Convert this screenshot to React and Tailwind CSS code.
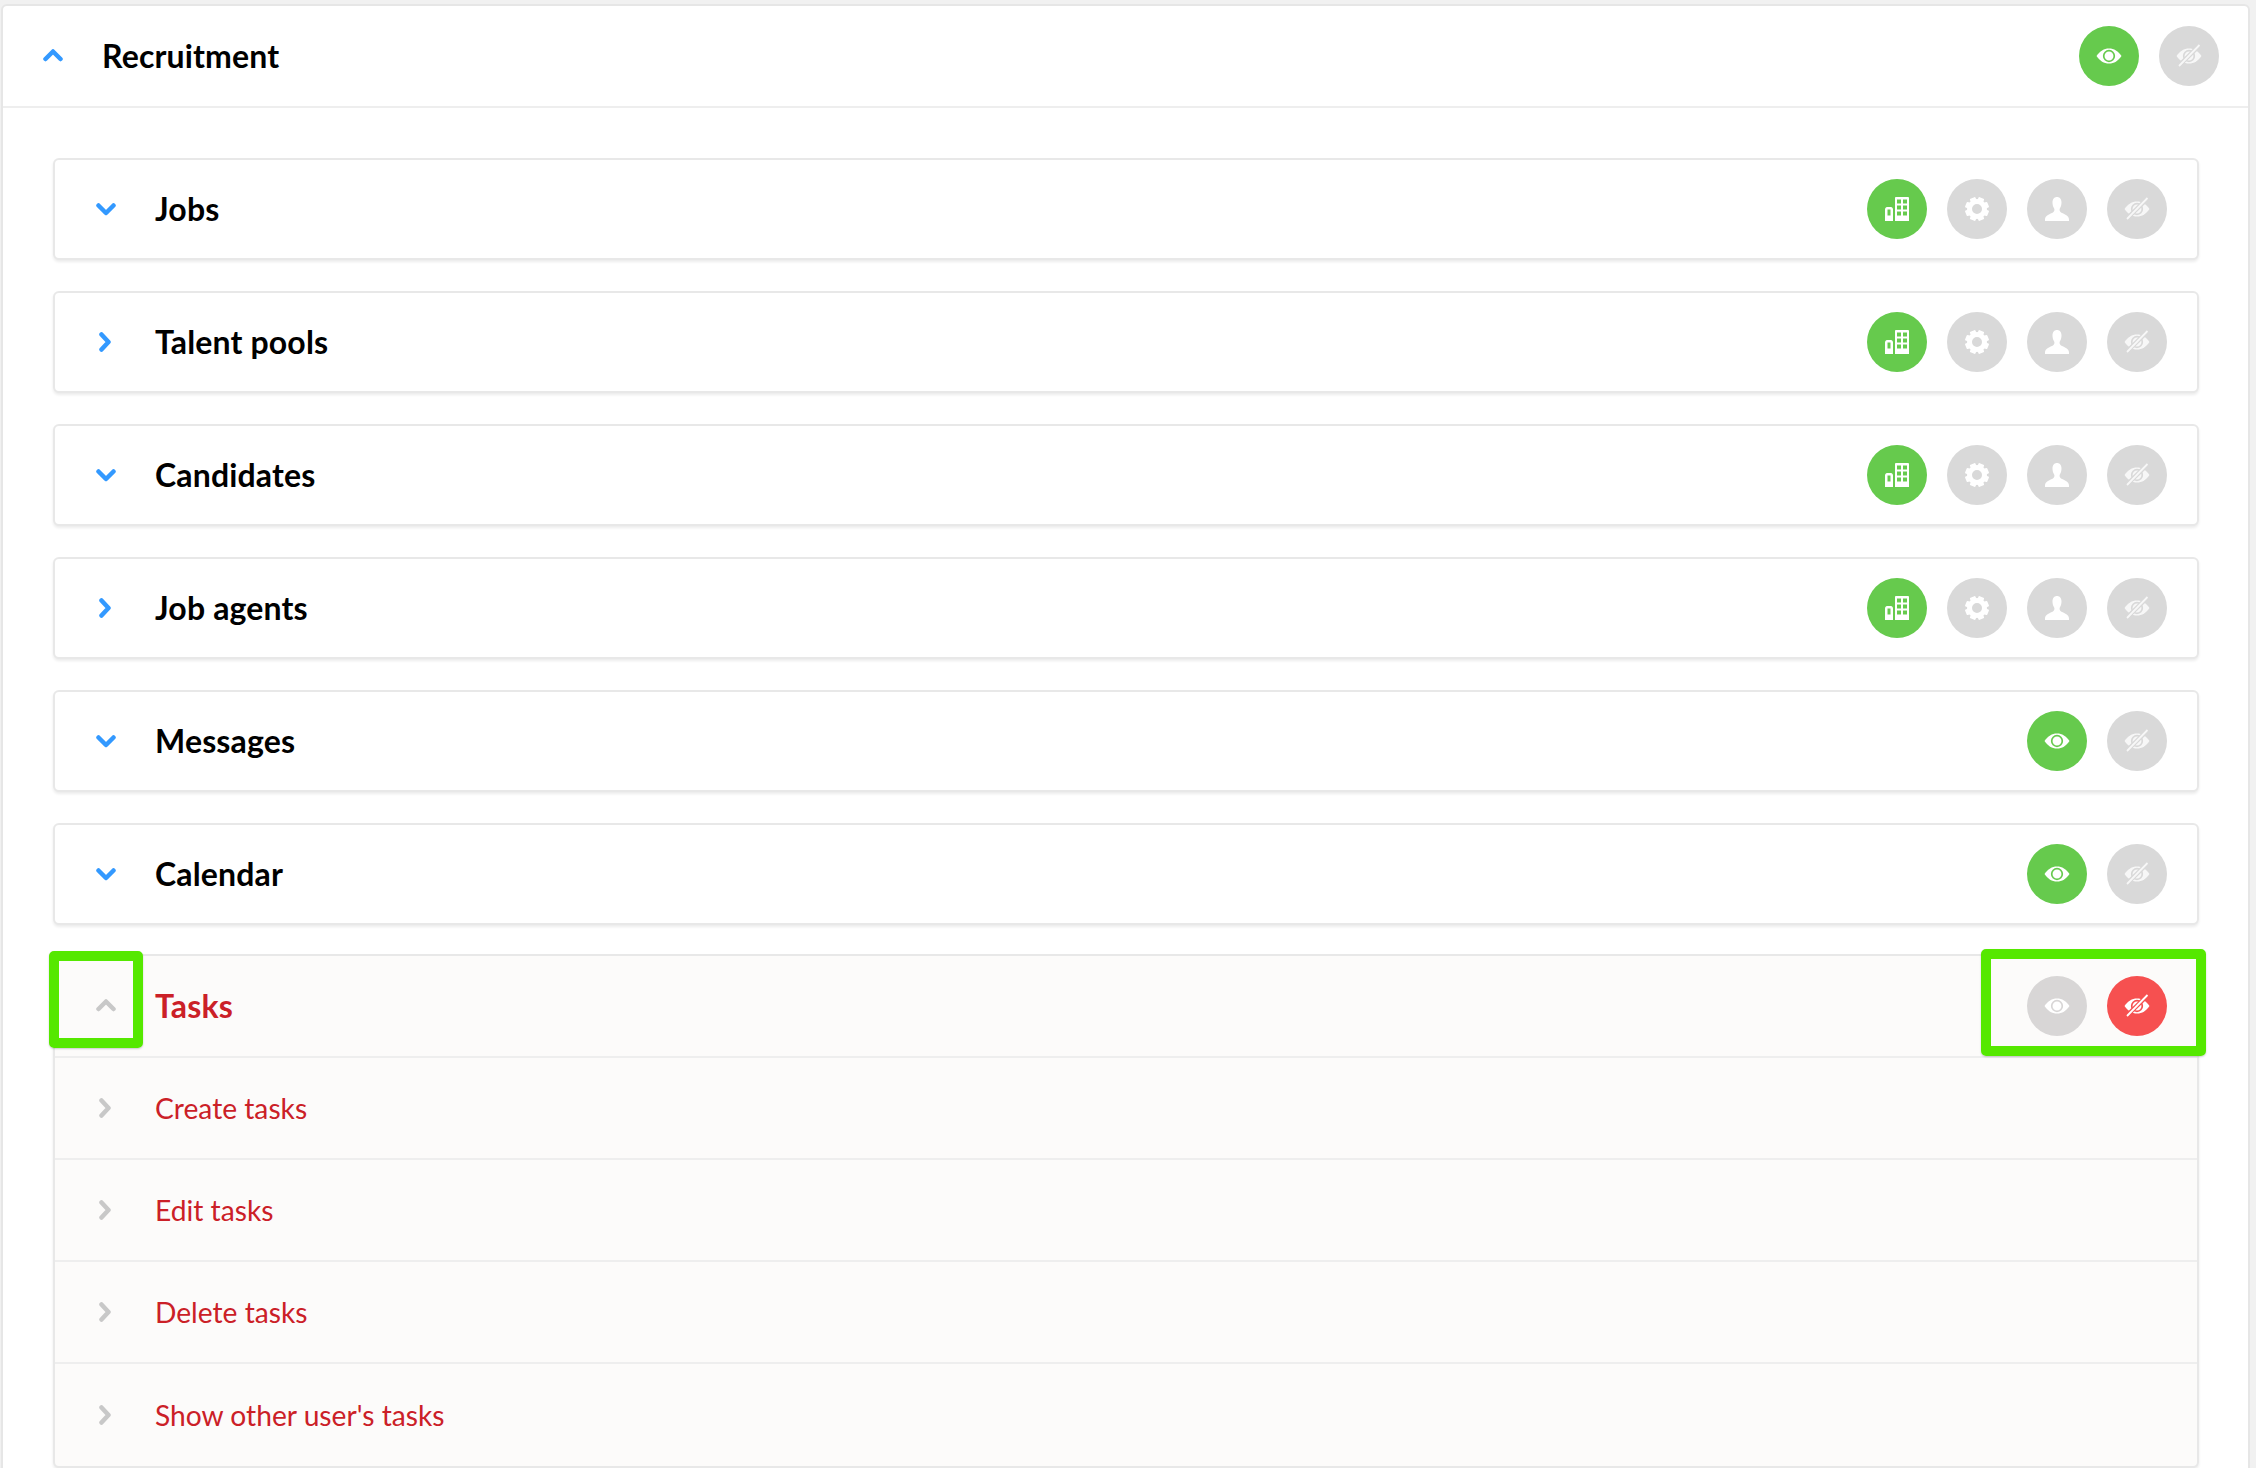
import React from "react";

const font = { fontFamily: "Lato, 'Open Sans', sans-serif" };

const Chevron = ({ dir, className }) => {
  const points = {
    up: "2.500,13 10,5.500 17.500,13",
    down: "2.500,6.500 10,14 17.500,6.500",
    right: "5.500,2.500 12.500,10 5.500,17.500",
  };
  return (
    <svg viewBox="0 0 20 20" className={`h-[20px] w-[20px] ${className}`} fill="none" stroke="currentColor" strokeWidth="4.500" strokeLinejoin="round" strokeLinecap="round">
      <polyline points={points[dir]} />
    </svg>
  );
};

const EyeShape = ({ ring }) => (
  <>
    <path d="M0.5 12C4 7 7.800 4.500 13 4.500S22 7 25.500 12C22 17 18.200 19.500 13 19.500S4 17 0.500 12Z" fill="#fff" />
    <circle cx="13" cy="12" r="5.300" fill="#fff" stroke={ring} strokeWidth="1.700" />
  </>
);

const EyeIcon = ({ ring }) => (
  <svg viewBox="0 0 26 24" className="h-[24px] w-[26px]">
    <EyeShape ring={ring} />
  </svg>
);

const EyeOffIcon = ({ ring }) => (
  <svg viewBox="0 0 26 24" className="h-[24px] w-[26px]">
    <g opacity={ring === "#f65050" ? 1 : 0.8}>
      <EyeShape ring={ring} />
      <line x1="23.500" y1="1.500" x2="3" y2="21.500" stroke={ring} strokeWidth="4.500" />
      <line x1="23.500" y1="1" x2="3" y2="22" stroke="#fff" strokeWidth="1.800" />
    </g>
  </svg>
);

const BuildingIcon = () => (
  <svg viewBox="0 0 24 24" className="h-[24px] w-[24px]">
    <path
      fillRule="evenodd"
      fill="#fff"
      d="M0 24V12.500C0 11 1 10 2 10H6C7 10 8 11 8 12.500V24ZM2.500 12.500V18.500H5.500V12.500ZM10 24V1C10 .5 10.500 0 11 0H23C23.500 0 24 .5 24 1V24ZM12 2.500V6.500H16V2.500ZM18 2.500V6.500H22V2.500ZM12 8.500V12.500H16V8.500ZM18 8.500V12.500H22V8.500ZM12 14.500V18.500H16V14.500ZM18 14.500V18.500H22V14.500Z"
    />
  </svg>
);

const GearIcon = () => (
  <svg viewBox="0 0 24 24" className="h-[24px] w-[24px]">
    {[0, 45, 90, 135, 180, 225, 270, 315].map((deg) => (
      <rect key={deg} x="9" y="0" width="6" height="6" rx="1" fill="#fff" transform={`rotate(${deg + 22.5} 12 12)`} />
    ))}
    <circle cx="12" cy="12" r="7.500" fill="none" stroke="#fff" strokeWidth="5" />
  </svg>
);

const PersonIcon = () => (
  <svg viewBox="0 0 24 24" className="h-[24px] w-[24px]">
    <path
      fill="#fff"
      d="M12 0C14.800 0 16.500 2.200 16.500 5.500C16.500 8 15.800 10 14.800 11.500C14.300 12.500 14.500 14.500 16 15.500C18.500 17 24 18 24 22.500V24H0V22.500C0 18 5.500 17 8 15.500C9.500 14.500 9.700 12.500 9.200 11.500C8.200 10 7.500 8 7.500 5.500C7.500 2.200 9.200 0 12 0Z"
    />
  </svg>
);

const Dot = ({ color, children }) => (
  <div className={`flex h-[60px] w-[60px] items-center justify-center rounded-full ${color}`}>{children}</div>
);

const GREEN = "#66ca4d";
const GRAY = "#d9d9d9";

const ScopeButtons = () => (
  <div className="flex gap-[20px]">
    <Dot color="bg-[#66ca4d]"><BuildingIcon /></Dot>
    <Dot color="bg-[#d9d9d9]"><GearIcon /></Dot>
    <Dot color="bg-[#d9d9d9]"><PersonIcon /></Dot>
    <Dot color="bg-[#d9d9d9]"><EyeOffIcon ring={GRAY} /></Dot>
  </div>
);

const VisibleButtons = () => (
  <div className="flex gap-[20px]">
    <Dot color="bg-[#66ca4d]"><EyeIcon ring={GREEN} /></Dot>
    <Dot color="bg-[#d9d9d9]"><EyeOffIcon ring={GRAY} /></Dot>
  </div>
);

const Title = ({ children, className }) => (
  <span className={`text-[32px] font-bold leading-none tracking-[0.15px] ${className}`}>{children}</span>
);

const Row = ({ title, dir, children }) => (
  <div className="flex h-[102px] items-center justify-between rounded-[6px] border-2 border-[#e8e8e8] bg-white pl-[41px] pr-[30px] shadow-[0_2px_3px_rgba(0,0,0,0.08)]">
    <div className="flex items-center">
      <Chevron dir={dir} className="mr-[39px] text-[#3399ff]" />
      <Title className="text-black">{title}</Title>
    </div>
    {children}
  </div>
);

const subItems = ["Create tasks", "Edit tasks", "Delete tasks", "Show other user's tasks"];

const TasksCard = () => (
  <div className="relative -mt-[2px] rounded-[6px] border-2 border-[#e8e8e8] bg-[#fcfbfa] shadow-[0_2px_3px_rgba(0,0,0,0.08)]">
    <div className="flex h-[102px] items-center justify-between border-b-2 border-[#eeeeee] pl-[41px] pr-[30px]">
      <div className="flex items-center">
        <Chevron dir="up" className="mr-[39px] text-[#c8c8c8]" />
        <Title className="text-[#cb2027]">Tasks</Title>
      </div>
      <div className="flex gap-[20px]">
        <Dot color="bg-[#d8d6d6]"><EyeIcon ring="#d8d6d6" /></Dot>
        <Dot color="bg-[#f65050]"><EyeOffIcon ring="#f65050" /></Dot>
      </div>
    </div>
    {subItems.map((item, i) => (
      <div key={item} className={`flex h-[102px] items-center pl-[41px] ${i < 3 ? "border-b-2 border-[#eeeeee]" : ""}`}>
        <Chevron dir="right" className="mr-[39px] text-[#c8c8c8]" />
        <span className="text-[28.200px] leading-none text-[#cb2027]">{item}</span>
      </div>
    ))}
    {/* green callouts drawn on top of the screenshot */}
    <div className="absolute left-[-6px] top-[-5px] h-[97px] w-[94px] rounded-[5px] border-[10px] border-[#55e800] shadow-[0_1px_2px_rgba(0,0,0,0.2)]" />
    <div className="absolute right-[-9px] top-[-7px] h-[107px] w-[225px] rounded-[5px] border-[10px] border-[#55e800] shadow-[0_1px_2px_rgba(0,0,0,0.2)]" />
  </div>
);

export default function App() {
  return (
    <div className="h-[1468px] w-[2256px] overflow-hidden bg-[#f1f1f1] pl-[1px] pr-[6px] pt-[4px]" style={font}>
      <div className="h-[1470px] rounded-t-[6px] border-2 border-[#e6e6e6] bg-white">
        <div className="flex h-[102px] items-center justify-between border-b-2 border-[#eeeeee] pl-[40px] pr-[29px]">
          <div className="flex items-center">
            <Chevron dir="up" className="mr-[39px] text-[#3399ff]" />
            <Title className="text-black">Recruitment</Title>
          </div>
          <VisibleButtons />
        </div>
        <div className="flex flex-col gap-[31px] pl-[50px] pr-[49px] pt-[50px]">
          <Row title="Jobs" dir="down"><ScopeButtons /></Row>
          <Row title="Talent pools" dir="right"><ScopeButtons /></Row>
          <Row title="Candidates" dir="down"><ScopeButtons /></Row>
          <Row title="Job agents" dir="right"><ScopeButtons /></Row>
          <Row title="Messages" dir="down"><VisibleButtons /></Row>
          <Row title="Calendar" dir="down"><VisibleButtons /></Row>
          <TasksCard />
        </div>
      </div>
    </div>
  );
}
